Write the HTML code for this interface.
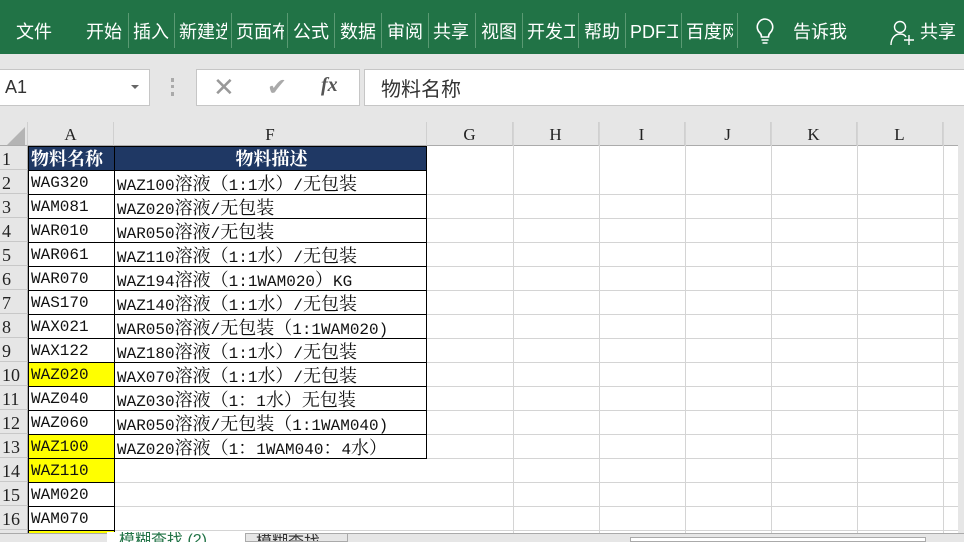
<!DOCTYPE html>
<html><head><meta charset="utf-8"><style>
*{margin:0;padding:0;box-sizing:border-box}
body{width:964px;height:542px;overflow:hidden;background:#e6e6e6;position:relative;font-family:"Liberation Sans","Noto Sans CJK SC",sans-serif}
.rib{position:absolute;left:0;top:0;width:964px;height:54px;background:#217346;color:#fff;font-size:18px}
.rib span{position:absolute;top:21px;line-height:22px;white-space:nowrap;overflow:hidden}
.sep{position:absolute;top:13px;width:1px;height:35px;background:#5a9a73}
.box{position:absolute;background:#fff;border:1px solid #c6c6c6}
.grid{position:absolute;left:0;top:122px;width:958px;height:411px;background:#fff;overflow:hidden}
.hl{position:absolute;left:0;height:1px;background:#d4d4d4;width:958px}
.vl{position:absolute;top:0;width:1px;background:#d4d4d4;height:411px}
.ch{position:absolute;top:0;height:24px;background:#e6e6e6;font-family:"Liberation Serif",serif;font-size:17px;text-align:center;line-height:25px;color:#222;border-right:1px solid #d0d0d0;border-bottom:1px solid #ababab}
.rh{position:absolute;left:0;width:28px;height:24px;background:#e6e6e6;font-family:"Liberation Serif",serif;font-size:18px;line-height:26px;padding-left:2px;color:#222;border-bottom:1px solid #c8c8c8;border-right:1px solid #ababab}
.cell{position:absolute;height:25px;border:1px solid #000;font-family:"Liberation Mono","Noto Serif CJK SC",monospace;font-size:16px;line-height:25px;padding-left:2px;color:#111;white-space:nowrap;overflow:hidden}
.c{font-family:"Noto Serif CJK SC",serif;font-size:18px}
.y{background:#ffff00}
.hd{background:#1f3864;color:#fff;font-weight:bold;font-family:"Noto Serif CJK SC",serif;font-size:18px;line-height:22px}
</style></head><body>
<div class="rib">
<span style="left:16px">文件</span>
<span style="left:86px">开始</span><div class="sep" style="left:128px"></div>
<span style="left:133px">插入</span><div class="sep" style="left:174px"></div>
<span style="left:179px;width:48px">新建选</span><div class="sep" style="left:231px"></div>
<span style="left:236px;width:48px">页面布</span><div class="sep" style="left:287px"></div>
<span style="left:293px">公式</span><div class="sep" style="left:334px"></div>
<span style="left:340px">数据</span><div class="sep" style="left:381px"></div>
<span style="left:387px">审阅</span><div class="sep" style="left:428px"></div>
<span style="left:433px">共享</span><div class="sep" style="left:475px"></div>
<span style="left:481px">视图</span><div class="sep" style="left:522px"></div>
<span style="left:527px;width:48px">开发工</span><div class="sep" style="left:578px"></div>
<span style="left:584px">帮助</span><div class="sep" style="left:625px"></div>
<span style="left:630px;width:48px">PDF工</span><div class="sep" style="left:681px"></div>
<span style="left:686px;width:47px">百度网</span><div class="sep" style="left:737px"></div>
<svg style="position:absolute;left:754px;top:17px" width="22" height="28" viewBox="0 0 22 28"><path d="M11 2a8 8 0 0 0-5 14c1 1 1.5 2 1.5 4h7c0-2 .5-3 1.5-4A8 8 0 0 0 11 2z" fill="none" stroke="#fff" stroke-width="1.6"/><path d="M7.5 23h7M8.5 26h5" stroke="#fff" stroke-width="1.6"/></svg>
<span style="left:793px">告诉我</span>
<svg style="position:absolute;left:890px;top:20px" width="26" height="26" viewBox="0 0 26 26"><circle cx="10" cy="7" r="5.5" fill="none" stroke="#fff" stroke-width="1.4"/><path d="M1 25c0-7 4-11 9-11 3 0 5 1 6 3" fill="none" stroke="#fff" stroke-width="1.4"/><path d="M14 20h10M19 15v10" stroke="#fff" stroke-width="1.4"/></svg>
<span style="left:920px">共享</span>
</div>
<div class="box" style="left:-1px;top:69px;width:151px;height:37px"><span style="position:absolute;left:5px;top:7px;font-size:18px;color:#333">A1</span><span style="position:absolute;left:131px;top:15px;border-left:4px solid transparent;border-right:4px solid transparent;border-top:4px solid #666"></span></div>
<div style="position:absolute;left:171px;top:78px;width:3px;height:18px;border-left:3px dotted #aaa"></div>
<div class="box" style="left:196px;top:69px;width:164px;height:37px">
<span style="position:absolute;left:16px;top:2px;font-size:26px;color:#999;font-weight:300">✕</span>
<span style="position:absolute;left:70px;top:3px;font-size:24px;color:#aaa">✔</span>
<span style="position:absolute;left:124px;top:4px;font-size:20px;color:#555;font-style:italic;font-family:'Liberation Serif',serif;font-weight:bold">fx</span></div>
<div class="box" style="left:364px;top:69px;width:610px;height:37px"><span style="position:absolute;left:16px;top:3px;font-size:20px;color:#333">物料名称</span></div>
<div class="grid">
<div class="ch" style="left:0;width:28px;background:#e6e6e6"><svg style="position:absolute;left:5px;top:3px" width="20" height="20"><path d="M20 2L20 20L2 20Z" fill="#b4b4b4"/></svg></div>
<div class="ch" style="left:28px;width:86px">A</div>
<div class="ch" style="left:114px;width:313px">F</div>
<div class="ch" style="left:427px;width:86px">G</div>
<div class="ch" style="left:513px;width:86px">H</div>
<div class="ch" style="left:599px;width:86px">I</div>
<div class="ch" style="left:685px;width:86px">J</div>
<div class="ch" style="left:771px;width:86px">K</div>
<div class="ch" style="left:857px;width:86px">L</div>
<div class="ch" style="left:943px;width:20px"></div>
<div class="vl" style="left:513px"></div><div class="vl" style="left:599px"></div><div class="vl" style="left:685px"></div><div class="vl" style="left:771px"></div><div class="vl" style="left:857px"></div><div class="vl" style="left:943px"></div>
<div class="hl" style="top:72px"></div><div class="hl" style="top:96px"></div><div class="hl" style="top:120px"></div><div class="hl" style="top:144px"></div><div class="hl" style="top:168px"></div><div class="hl" style="top:192px"></div><div class="hl" style="top:216px"></div><div class="hl" style="top:240px"></div><div class="hl" style="top:264px"></div><div class="hl" style="top:288px"></div><div class="hl" style="top:312px"></div><div class="hl" style="top:336px"></div><div class="hl" style="top:360px"></div><div class="hl" style="top:384px"></div><div class="hl" style="top:408px"></div>
<div class="rh" style="top:24px">1</div><div class="rh" style="top:48px">2</div><div class="rh" style="top:72px">3</div><div class="rh" style="top:96px">4</div><div class="rh" style="top:120px">5</div><div class="rh" style="top:144px">6</div><div class="rh" style="top:168px">7</div><div class="rh" style="top:192px">8</div><div class="rh" style="top:216px">9</div><div class="rh" style="top:240px">10</div><div class="rh" style="top:264px">11</div><div class="rh" style="top:288px">12</div><div class="rh" style="top:312px">13</div><div class="rh" style="top:336px">14</div><div class="rh" style="top:360px">15</div><div class="rh" style="top:384px">16</div><div class="rh" style="top:408px">17</div>
<div class="cell hd" style="left:28px;top:24px;width:87px">物料名称</div>
<div class="cell hd" style="left:114px;top:24px;width:313px;text-align:center">物料描述</div>
<div class="cell" style="left:28px;top:48px;width:87px">WAG320</div>
<div class="cell" style="left:28px;top:72px;width:87px">WAM081</div>
<div class="cell" style="left:28px;top:96px;width:87px">WAR010</div>
<div class="cell" style="left:28px;top:120px;width:87px">WAR061</div>
<div class="cell" style="left:28px;top:144px;width:87px">WAR070</div>
<div class="cell" style="left:28px;top:168px;width:87px">WAS170</div>
<div class="cell" style="left:28px;top:192px;width:87px">WAX021</div>
<div class="cell" style="left:28px;top:216px;width:87px">WAX122</div>
<div class="cell y" style="left:28px;top:240px;width:87px">WAZ020</div>
<div class="cell" style="left:28px;top:264px;width:87px">WAZ040</div>
<div class="cell" style="left:28px;top:288px;width:87px">WAZ060</div>
<div class="cell y" style="left:28px;top:312px;width:87px">WAZ100</div>
<div class="cell y" style="left:28px;top:336px;width:87px">WAZ110</div>
<div class="cell" style="left:28px;top:360px;width:87px">WAM020</div>
<div class="cell" style="left:28px;top:384px;width:87px">WAM070</div>
<div class="cell y" style="left:28px;top:408px;width:87px"></div>
<div class="cell" style="left:114px;top:48px;width:313px">WAZ100<span class="c">溶液（</span>1:1<span class="c">水）</span>/<span class="c">无包装</span></div>
<div class="cell" style="left:114px;top:72px;width:313px">WAZ020<span class="c">溶液</span>/<span class="c">无包装</span></div>
<div class="cell" style="left:114px;top:96px;width:313px">WAR050<span class="c">溶液</span>/<span class="c">无包装</span></div>
<div class="cell" style="left:114px;top:120px;width:313px">WAZ110<span class="c">溶液（</span>1:1<span class="c">水）</span>/<span class="c">无包装</span></div>
<div class="cell" style="left:114px;top:144px;width:313px">WAZ194<span class="c">溶液（</span>1:1WAM020<span class="c">）</span>KG</div>
<div class="cell" style="left:114px;top:168px;width:313px">WAZ140<span class="c">溶液（</span>1:1<span class="c">水）</span>/<span class="c">无包装</span></div>
<div class="cell" style="left:114px;top:192px;width:313px">WAR050<span class="c">溶液</span>/<span class="c">无包装（</span>1:1WAM020)</div>
<div class="cell" style="left:114px;top:216px;width:313px">WAZ180<span class="c">溶液（</span>1:1<span class="c">水）</span>/<span class="c">无包装</span></div>
<div class="cell" style="left:114px;top:240px;width:313px">WAX070<span class="c">溶液（</span>1:1<span class="c">水）</span>/<span class="c">无包装</span></div>
<div class="cell" style="left:114px;top:264px;width:313px">WAZ030<span class="c">溶液（</span>1<span class="c">：</span>1<span class="c">水）无包装</span></div>
<div class="cell" style="left:114px;top:288px;width:313px">WAR050<span class="c">溶液</span>/<span class="c">无包装（</span>1:1WAM040)</div>
<div class="cell" style="left:114px;top:312px;width:313px">WAZ020<span class="c">溶液（</span>1<span class="c">：</span>1WAM040<span class="c">：</span>4<span class="c">水）</span></div>
</div>
<div style="position:absolute;left:0;top:533px;width:964px;height:9px;background:#e6e6e6;border-top:1px solid #aaa"></div>
<div style="position:absolute;left:107px;top:532px;width:138px;height:10px;background:#fff;overflow:hidden;color:#217346;font-size:16px;line-height:18px;padding-left:12px">模糊查找 (2)</div>
<div style="position:absolute;left:245px;top:533px;width:103px;height:9px;border:1px solid #aaa;overflow:hidden;color:#333;font-size:16px;line-height:18px;padding-left:10px">模糊查找</div>
<div style="position:absolute;left:630px;top:537px;width:296px;height:5px;border:1px solid #aaa;background:#fff"></div>
</body></html>
